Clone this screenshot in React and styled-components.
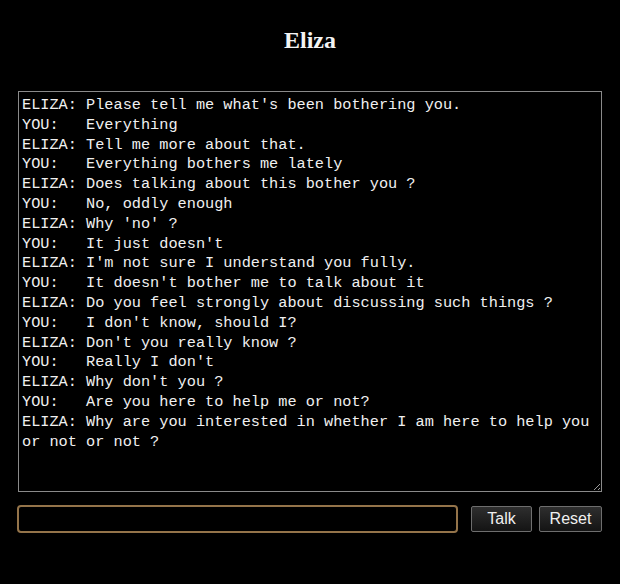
import { useState } from "react";
import styled, { createGlobalStyle } from "styled-components";

const GlobalStyle = createGlobalStyle`
  html, body {
    margin: 0;
    background: #000;
    color: #fff;
  }
`;

const Page = styled.div`
  width: 584px;
  margin: 0 auto;
  padding-top: 26px;
`;

const Title = styled.h2`
  margin: 0 0 37px;
  font-family: "Liberation Serif", "Times New Roman", serif;
  font-size: 24px;
  line-height: 28px;
  font-weight: bold;
  text-align: center;
  color: #f4f4f4;
`;

const Transcript = styled.textarea`
  display: block;
  box-sizing: border-box;
  width: 584px;
  height: 401px;
  margin: 0;
  padding: 4px 1px 4px 3px;
  background: #000;
  color: #f0f0f0;
  border: 1px solid #8a8a8a;
  border-radius: 0;
  font-family: "Liberation Mono", "DejaVu Sans Mono", monospace;
  font-size: 15.25px;
  line-height: 19.8px;
  outline: none;
`;

const InputRow = styled.form`
  display: flex;
  align-items: center;
  margin: 13px 0 0 -1px;
`;

const Entry = styled.input`
  box-sizing: border-box;
  width: 441px;
  height: 28px;
  margin: 0 13px 0 0;
  padding: 2px 6px;
  background: #000;
  color: #eee;
  border: 2px solid #94744a;
  border-radius: 4px;
  font-family: "Liberation Sans", Arial, sans-serif;
  font-size: 15px;
  outline: none;
`;

const Button = styled.button`
  box-sizing: border-box;
  width: ${(p) => p.$w}px;
  height: 26px;
  margin-left: ${(p) => (p.$gap ? 7 : 0)}px;
  padding: 0;
  background: linear-gradient(#2e2e2e, #141414);
  color: #f0f0f0;
  border: 1px solid #6e6e6e;
  border-radius: 2px;
  font-family: "Liberation Sans", Arial, sans-serif;
  font-size: 16px;
  line-height: 24px;
  cursor: pointer;
`;

const START = [
  "ELIZA: Please tell me what's been bothering you.",
  "YOU:   Everything",
  "ELIZA: Tell me more about that.",
  "YOU:   Everything bothers me lately",
  "ELIZA: Does talking about this bother you ?",
  "YOU:   No, oddly enough",
  "ELIZA: Why 'no' ?",
  "YOU:   It just doesn't",
  "ELIZA: I'm not sure I understand you fully.",
  "YOU:   It doesn't bother me to talk about it",
  "ELIZA: Do you feel strongly about discussing such things ?",
  "YOU:   I don't know, should I?",
  "ELIZA: Don't you really know ?",
  "YOU:   Really I don't",
  "ELIZA: Why don't you ?",
  "YOU:   Are you here to help me or not?",
  "ELIZA: Why are you interested in whether I am here to help you or not or not ?",
].join("\n");

export default function App() {
  const [log, setLog] = useState(START);
  const [text, setText] = useState("");

  const talk = (e) => {
    e.preventDefault();
    if (!text.trim()) return;
    setLog(log + "\nYOU:   " + text + "\nELIZA: Please go on.");
    setText("");
  };

  return (
    <>
      <GlobalStyle />
      <Page>
        <Title>Eliza</Title>
        <Transcript value={log} readOnly />
        <InputRow onSubmit={talk}>
          <Entry value={text} onChange={(e) => setText(e.target.value)} />
          <Button $w={61} type="submit">
            Talk
          </Button>
          <Button $w={63} $gap type="button" onClick={() => setLog("ELIZA: Please tell me what's been bothering you.")}>
            Reset
          </Button>
        </InputRow>
      </Page>
    </>
  );
}
